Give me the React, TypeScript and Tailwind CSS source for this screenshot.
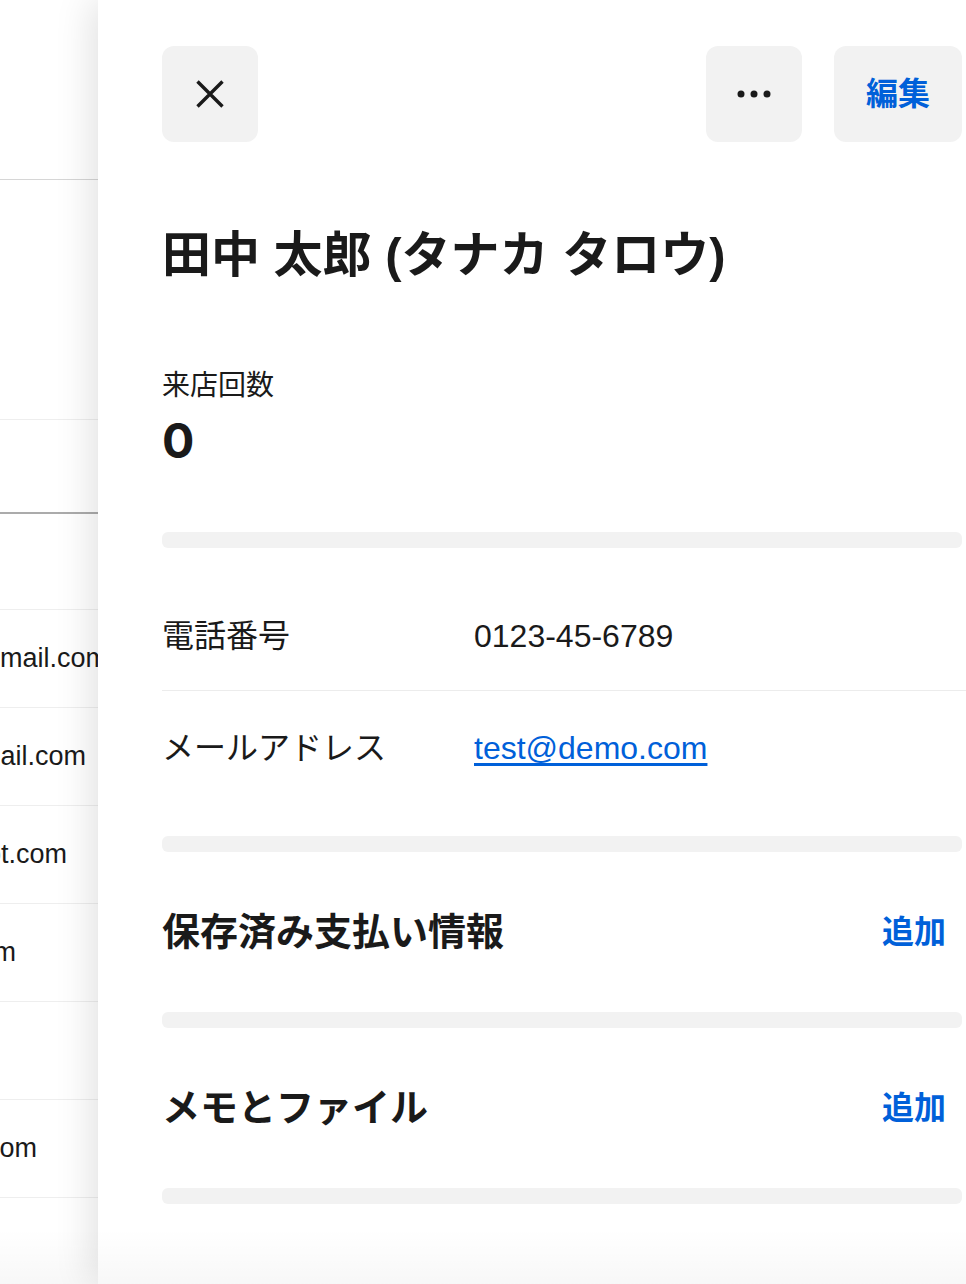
import React from 'react';

const FONT = "font-['Liberation_Sans','Noto_Sans_CJK_JP',sans-serif]";

// 背景に見えている顧客一覧（右側パネルに隠れている）
const rows = [
  { email: 'kobayashi.yui@gmail.com', width: 'w-[108px]' },
  { email: 'sato.kenji@gmail.com', width: 'w-[86px]' },
  { email: 'info@ppt.com', width: 'w-[67px]' },
  { email: 'ito.mika@icloud.com', width: 'w-[16px]' },
  { email: '', width: 'w-[10px]' },
  { email: 'nakamura@yahoo.com', width: 'w-[37px]' },
  { email: '', width: 'w-[10px]' },
];

const CloseIcon = () => (
  <svg width="28" height="28" viewBox="0 0 28 28" fill="none">
    <path d="M1.5 1.5 L26.5 26.5 M26.5 1.5 L1.5 26.5" stroke="#1a1a1a" strokeWidth="3.4" />
  </svg>
);

const MoreIcon = () => (
  <svg width="34" height="8" viewBox="0 0 34 8" fill="#1a1a1a">
    <circle cx="4" cy="4" r="3.5" />
    <circle cx="17" cy="4" r="3.5" />
    <circle cx="30" cy="4" r="3.5" />
  </svg>
);

const Bar = () => <div className="h-4 w-full rounded-[6px] bg-[#f2f2f2]" />;

const SectionHeader: React.FC<{ title: string }> = ({ title }) => (
  <div className="flex h-[160px] items-center justify-between">
    <h2 className="text-[38px] font-bold leading-[48px] text-[#1a1a1a]">{title}</h2>
    <button type="button" className="px-4 text-[32px] font-bold leading-[44px] text-[#0060d9]">
      追加
    </button>
  </div>
);

const App: React.FC = () => {
  return (
    <div className={`relative h-[1284px] w-[966px] overflow-hidden bg-white text-[#1a1a1a] ${FONT}`}>
      {/* 背景の一覧 */}
      <div className="flex flex-col">
        <div className="h-[180px] border-b border-[#d6d6d6]" />
        <div className="h-[240px] border-b border-[#eeeeee]" />
        <div className="h-[94px] border-b-2 border-[#ababab]" />
        <div className="h-[96px] border-b border-[#eeeeee]" />
        {rows.map((row, i) => (
          <div key={i} className="flex h-[98px] items-center border-b border-[#eeeeee]">
            <div className={`flex shrink-0 justify-end whitespace-nowrap text-[27px] ${row.width}`}>{row.email}</div>
          </div>
        ))}
      </div>

      {/* 顧客詳細パネル */}
      <aside className="absolute top-0 right-0 bottom-0 left-[98px] flex flex-col bg-white pr-[4px] pl-[64px] shadow-[-6px_0_36px_rgba(0,0,0,0.12)]">
        <div className="flex items-center justify-between pt-[46px]">
          <button type="button" className="flex h-[96px] w-[96px] items-center justify-center rounded-[12px] bg-[#f2f2f2]">
            <CloseIcon />
          </button>
          <div className="flex gap-8">
            <button type="button" className="flex h-[96px] w-[96px] items-center justify-center rounded-[12px] bg-[#f2f2f2]">
              <MoreIcon />
            </button>
            <button type="button" className="flex h-[96px] items-center rounded-[12px] bg-[#f2f2f2] px-8 text-[32px] font-bold text-[#0060d9]">
              編集
            </button>
          </div>
        </div>

        <h1 className="mt-[83px] text-[49px] font-bold leading-[60px]">田中 太郎 (タナカ タロウ)</h1>

        <div className="mt-[81px]">
          <p className="text-[28px] leading-[40px]">来店回数</p>
          <p className="mt-[7px] font-['Inter',sans-serif] text-[48px] font-bold leading-[56px]">0</p>
        </div>

        <div className="mt-[63px]">
          <Bar />
        </div>

        <div className="pt-[33px] pb-[35px]">
          <div className="-mr-[4px] flex h-[110px] items-center border-b border-[#ececec] text-[32px]">
            <span className="w-[312px] shrink-0">電話番号</span>
            <span>0123-45-6789</span>
          </div>
          <div className="flex h-[110px] items-center pt-[4px] text-[32px]">
            <span className="w-[312px] shrink-0">メールアドレス</span>
            <a href="#" className="text-[#0060d9] underline underline-offset-[4px]">
              test@demo.com
            </a>
          </div>
        </div>

        <Bar />
        <SectionHeader title="保存済み支払い情報" />
        <Bar />
        <SectionHeader title="メモとファイル" />
        <Bar />
      </aside>

      {/* 下端のフェード */}
      <div className="pointer-events-none absolute right-0 bottom-0 left-0 h-[56px] bg-gradient-to-b from-transparent to-black/[0.03]" />
    </div>
  );
};

export default App;
